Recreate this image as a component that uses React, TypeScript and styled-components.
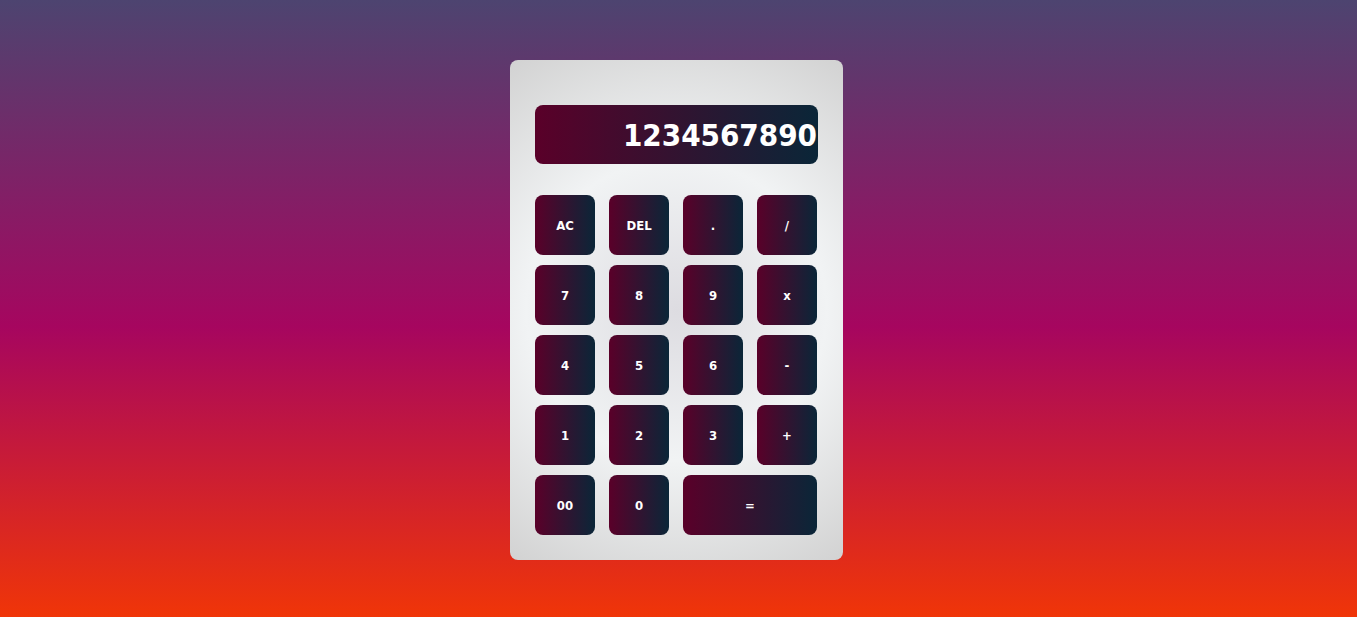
import React, { FC } from "react";
import styled, { createGlobalStyle } from "styled-components";

const GlobalStyle = createGlobalStyle`
  html, body {
    margin: 0;
    padding: 0;
    height: 100%;
  }

  body {
    background: linear-gradient(to bottom, #4d4470 0%, #a6065f 53%, #f03508 100%);
    font-family: "DejaVu Sans Condensed", "DejaVu Sans", Verdana, sans-serif;
  }

  #root {
    height: 100%;
  }
`;

const Page = styled.div`
  display: flex;
  justify-content: center;
  align-items: flex-start;
  height: 100%;
  padding: 60px 4px 0 0;
  box-sizing: border-box;
`;

const Calculator = styled.div`
  width: 333px;
  height: 500px;
  box-sizing: border-box;
  padding: 45px 25px 25px 25px;
  border-radius: 8px;
  background: radial-gradient(circle farthest-corner at 50% 50%, #dddce1 0%, #f1f3f4 50%, #d2d2d2 100%);
  display: flex;
  flex-direction: column;
`;

const Display = styled.div`
  height: 59px;
  width: 283px;
  border-radius: 8px;
  background: linear-gradient(to right, #5a0029 0%, #0a2638 100%);
  display: flex;
  align-items: center;
  justify-content: flex-end;
  overflow: hidden;
  color: #fff;
  font-weight: 700;
  font-size: 31px;
  padding-right: 1px;
  box-sizing: border-box;
  margin-bottom: 31px;
`;

const Keys = styled.div`
  display: grid;
  grid-template-columns: repeat(4, 60px);
  grid-auto-rows: 60px;
  column-gap: 14px;
  row-gap: 10px;
`;

const Key = styled.button<{ $wide?: boolean }>`
  grid-column: ${({ $wide }) => ($wide ? "span 2" : "span 1")};
  border: none;
  border-radius: 8px;
  background: linear-gradient(to right, #5a0029 0%, #0a2638 100%);
  color: #fff;
  font-family: "DejaVu Sans Condensed", "DejaVu Sans", Verdana, sans-serif;
  font-weight: 700;
  font-size: 13px;
  padding: 0;
  cursor: pointer;
`;

const keys: { label: string; wide?: boolean }[] = [
  { label: "AC" }, { label: "DEL" }, { label: "." }, { label: "/" },
  { label: "7" }, { label: "8" }, { label: "9" }, { label: "x" },
  { label: "4" }, { label: "5" }, { label: "6" }, { label: "-" },
  { label: "1" }, { label: "2" }, { label: "3" }, { label: "+" },
  { label: "00" }, { label: "0" }, { label: "=", wide: true },
];

const App: FC = () => {
  return (
    <>
      <GlobalStyle />
      <Page>
        <Calculator>
          <Display>1234567890</Display>
          <Keys>
            {keys.map((k) => (
              <Key key={k.label} $wide={k.wide}>
                {k.label}
              </Key>
            ))}
          </Keys>
        </Calculator>
      </Page>
    </>
  );
};

export default App;
